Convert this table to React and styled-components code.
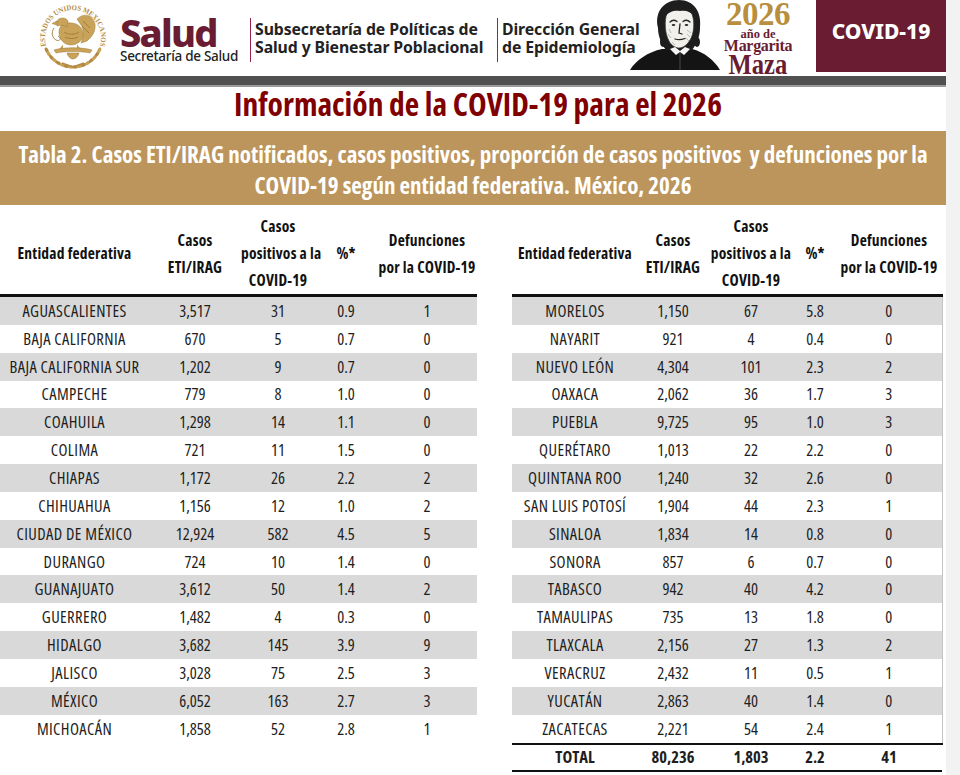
import React from "react";
import styled, { createGlobalStyle } from "styled-components";

const COND = `"Open Sans", "Liberation Sans Narrow", sans-serif`;
const MAROON = "#691c32";
const GOLD = "#bc955c";

const GlobalStyle = createGlobalStyle`
  html, body { margin: 0; padding: 0; background: #fff; }
  body { font-family: ${COND}; font-stretch: 75%; color: #1a1a1a; }
`;

const Page = styled.div`
  display: grid;
  grid-template-columns: 946px 14px;
  min-height: 775px;
`;
const Main = styled.main`
  display: flex;
  flex-direction: column;
`;
const Gutter = styled.aside`
  background: #f2f2f2;
`;

const Header = styled.header`
  height: 76px;
  display: flex;
  align-items: flex-start;
`;
const Seal = styled.div`
  margin: 2px 0 0 37px;
  width: 72px;
  height: 71px;
`;
const Brand = styled.div`
  margin: 15px 0 0 11px;
  display: flex;
  flex-direction: column;
  font-family: "Noto Sans", sans-serif;
  font-stretch: 100%;
`;
const BrandName = styled.span`
  font-size: 38px;
  font-weight: 800;
  line-height: 35px;
  letter-spacing: -1.8px;
  color: ${MAROON};
`;
const BrandSub = styled.span`
  font-size: 13.5px;
  font-weight: 500;
  line-height: 12px;
  color: #222;
  letter-spacing: -0.3px;
`;
const Divider = styled.div`
  width: 1px;
  height: 44px;
  margin: 18px 4px 0 ${(p) => p.$ml}px;
  background: #9b2247;
`;
const Unit = styled.div`
  margin-top: 20px;
  font-family: "Noto Sans", sans-serif;
  font-stretch: 100%;
  font-weight: 700;
  font-size: 15.8px;
  line-height: 18px;
  color: #222;
  width: ${(p) => p.$w}px;
  letter-spacing: -0.1px;
  white-space: nowrap;
`;
const Portrait = styled.div`
  width: 90px;
  height: 70px;
  margin-left: -10px;
`;
const YearMark = styled.div`
  margin: 0 0 0 5px;
  width: 66px;
  height: 72px;
  display: flex;
  flex-direction: column;
  align-items: center;
  font-family: "Liberation Serif", serif;
  font-stretch: 100%;
  font-weight: 700;
`;
const Year = styled.span`
  font-size: 33px;
  line-height: 29px;
  height: 29px;
  color: #b88f3e;
  letter-spacing: -0.5px;
`;
const YearSmall = styled.span`
  font-size: 12.5px;
  line-height: 10px;
  height: 10px;
  color: ${MAROON};
`;
const YearMid = styled.span`
  font-size: 16px;
  line-height: 13px;
  height: 13px;
  color: ${MAROON};
  letter-spacing: -0.3px;
`;
const YearBig = styled.span`
  font-size: 30px;
  line-height: 21px;
  height: 21px;
  margin-top: 1px;
  color: ${MAROON};
  transform: scaleX(0.82);
`;
const CovidBox = styled.div`
  margin-left: auto;
  width: 130px;
  height: 72px;
  background: ${MAROON};
  color: #fff;
  display: flex;
  align-items: center;
  justify-content: center;
  font-family: "Noto Sans", sans-serif;
  font-stretch: 100%;
  font-weight: 800;
  font-size: 21px;
  padding-bottom: 10px;
  box-sizing: border-box;
`;

const RuleBar = styled.div`
  height: 9px;
  background: #505050;
  border-bottom: 2px solid #9a9a9a;
`;

const Title = styled.h1`
  margin: 0;
  height: 44px;
  line-height: 34px;
  padding-left: 10px;
  text-align: center;
  font-size: 31.5px;
  font-weight: 700;
  color: #800000;
`;

const Caption = styled.div`
  background: ${GOLD};
  color: #fff;
  height: 74px;
  box-sizing: border-box;
  padding: 8px 0 0;
  text-align: center;
  font-size: 23px;
  font-weight: 700;
  line-height: 31px;
  white-space: pre-wrap;
`;

const Tables = styled.div`
  display: flex;
  gap: 35px;
  align-items: flex-start;
`;

const Table = styled.table`
  width: ${(p) => p.$w}px;
  table-layout: fixed;
  border-collapse: collapse;
  font-size: 16.5px;
`;
const Th = styled.th`
  height: 81px;
  padding: 8px 0 0;
  vertical-align: middle;
  font-size: 15.5px;
  font-weight: 700;
  line-height: 27px;
  letter-spacing: 0.2px;
  text-align: center;
  color: #111;
  border-bottom: 3px solid #111;
  white-space: nowrap;
`;
const Tr = styled.tr`
  background: ${(p) => (p.$shade ? "#d9d9d9" : "#fff")};
`;
const Td = styled.td`
  height: 27.85px;
  padding: 0;
  text-align: center;
  line-height: 20px;
  white-space: nowrap;
  color: #1e1e1e;
  font-weight: ${(p) => (p.$bold ? 700 : 400)};
  letter-spacing: ${(p) => (p.$name ? "0.4px" : "0")};
  ${(p) => (p.$edge ? "border-right: 1px solid #c4c4c4;" : "")}
`;
const TotalRow = styled.tr`
  border-top: 2px solid #111;
  border-bottom: 2px solid #111;
  td { height: 25px; }
`;

const left = [
  ["AGUASCALIENTES", "3,517", "31", "0.9", "1"],
  ["BAJA CALIFORNIA", "670", "5", "0.7", "0"],
  ["BAJA CALIFORNIA SUR", "1,202", "9", "0.7", "0"],
  ["CAMPECHE", "779", "8", "1.0", "0"],
  ["COAHUILA", "1,298", "14", "1.1", "0"],
  ["COLIMA", "721", "11", "1.5", "0"],
  ["CHIAPAS", "1,172", "26", "2.2", "2"],
  ["CHIHUAHUA", "1,156", "12", "1.0", "2"],
  ["CIUDAD DE MÉXICO", "12,924", "582", "4.5", "5"],
  ["DURANGO", "724", "10", "1.4", "0"],
  ["GUANAJUATO", "3,612", "50", "1.4", "2"],
  ["GUERRERO", "1,482", "4", "0.3", "0"],
  ["HIDALGO", "3,682", "145", "3.9", "9"],
  ["JALISCO", "3,028", "75", "2.5", "3"],
  ["MÉXICO", "6,052", "163", "2.7", "3"],
  ["MICHOACÁN", "1,858", "52", "2.8", "1"],
];
const right = [
  ["MORELOS", "1,150", "67", "5.8", "0"],
  ["NAYARIT", "921", "4", "0.4", "0"],
  ["NUEVO LEÓN", "4,304", "101", "2.3", "2"],
  ["OAXACA", "2,062", "36", "1.7", "3"],
  ["PUEBLA", "9,725", "95", "1.0", "3"],
  ["QUERÉTARO", "1,013", "22", "2.2", "0"],
  ["QUINTANA ROO", "1,240", "32", "2.6", "0"],
  ["SAN LUIS POTOSÍ", "1,904", "44", "2.3", "1"],
  ["SINALOA", "1,834", "14", "0.8", "0"],
  ["SONORA", "857", "6", "0.7", "0"],
  ["TABASCO", "942", "40", "4.2", "0"],
  ["TAMAULIPAS", "735", "13", "1.8", "0"],
  ["TLAXCALA", "2,156", "27", "1.3", "2"],
  ["VERACRUZ", "2,432", "11", "0.5", "1"],
  ["YUCATÁN", "2,863", "40", "1.4", "0"],
  ["ZACATECAS", "2,221", "54", "2.4", "1"],
];
const total = ["TOTAL", "80,236", "1,803", "2.2", "41"];

function SealIcon() {
  const leaves = [];
  const n = 16;
  for (let i = 0; i < n; i++) {
    const deg = 205 + (i * 130) / (n - 1);
    const a = (deg * Math.PI) / 180;
    const x = 36 + Math.cos(a) * 29;
    const y = 36 - Math.sin(a) * 29;
    leaves.push(
      <ellipse key={i} cx={x} cy={y} rx="3" ry="1.7" fill={i % 2 ? "#c9a257" : "#b38a44"}
        transform={`rotate(${90 - deg} ${x} ${y})`} />
    );
  }
  return (
    <svg viewBox="0 0 72 71" width="72" height="71">
      <defs>
        <path id="sealArc" d="M 10.6 47.8 A 28 28 0 1 1 61.4 47.8" />
      </defs>
      <text fontSize="7.4" fill="#b58d46" fontFamily="Liberation Serif, serif" fontWeight="700">
        <textPath href="#sealArc" startOffset="50%" textAnchor="middle" textLength="104" lengthAdjust="spacingAndGlyphs">ESTADOS UNIDOS MEXICANOS</textPath>
      </text>
      {leaves}
      <g fill="#c9a35a" stroke="#9c7a35" strokeWidth="0.5">
        <path d="M40 17 C47 10 56 13 58 22 C59 29 55 35 50 39 L44 41 C47 34 47 27 44 23 Z" />
        <path d="M22 30 C22 23 28 20 34 21 C41 21 46 26 46 32 C46 39 40 43 34 43 C27 43 22 37 22 30 Z" />
        <path d="M20 19 C22 15 29 15 31 19 L30 25 C27 23 24 23 20 24 Z" />
        <path d="M20 19 L15 21.5 L19.5 23 Z" />
        <path d="M26 43 L22 48 L26 47 M40 43 L44 48 L40 47" />
        <path d="M17 48 C26 45 46 45 55 48 L53 51 C44 49 28 49 19 51 Z" />
        <path d="M30 51 C31 55 34 57 36 57 C38 57 41 55 42 51 Z" />
      </g>
      <g fill="none" stroke="#9c7a35" strokeWidth="0.9">
        <path d="M27 30 C31 33 38 33 42 30" />
        <path d="M28 35 C31 37 38 37 41 35" />
        <path d="M17 26 C14 30 15 36 19 38 C23 40 25 36 21 34" />
        <path d="M46 19 L53 26 M45 24 L52 31" />
      </g>
      <path d="M25 61 L36 65 L47 61" fill="none" stroke="#b38a44" strokeWidth="1.4" />
    </svg>
  );
}

function PortraitIcon() {
  return (
    <svg viewBox="0 0 90 70" width="90" height="70">
      <path d="M0 70 C6 60 18 52 32 49 L62 49 C74 52 84 60 90 70 Z" fill="#141414" />
      <path d="M28 28 C24 12 34 0 49 0 C64 0 72 12 70 28 C70 37 66 45 62 50 L36 50 C32 45 28 37 28 28 Z" fill="#1e1e1e" />
      <path d="M37 13 C42 8 58 8 62 14 C65 22 64 34 60 40 C57 45 53 48 49 48 C45 48 41 45 39 41 C35 34 34 21 37 13 Z" fill="#f2f0eb" stroke="#333" strokeWidth="0.7" />
      <path d="M35 17 C37 6 45 3 50 6 C55 3 63 6 65 17 C61 11 55 10 50 11 C45 10 39 11 35 17 Z" fill="#1e1e1e" />
      <g fill="none" stroke="#262626" strokeWidth="1.3" strokeLinecap="round">
        <path d="M40 22 C42 20 45 20 47 21.5" />
        <path d="M53 21.5 C55 20 58 20 60 22" />
        <path d="M50 24 L49 33 L52 34" />
        <path d="M45 39 C48 40 51 40 55 38.5" />
      </g>
      <g fill="#262626">
        <ellipse cx="43.5" cy="25" rx="1.8" ry="1.1" />
        <ellipse cx="56.5" cy="25" rx="1.8" ry="1.1" />
      </g>
      <g stroke="#777" strokeWidth="0.45" fill="none">
        <path d="M57 30 L61 33 M57 34 L60 37 M56 38 L59 41 M39 29 L41 33 M38 34 L41 38 M42 42 L45 45" />
      </g>
      <path d="M40 49 L46 55 L50 52 L54 55 L60 49 L55 47 L50 51 L45 47 Z" fill="#f5f5f5" />
      <path d="M50 53 L50 70" stroke="#555" strokeWidth="0.8" />
      <ellipse cx="33" cy="42" rx="3" ry="5" fill="#1e1e1e" />
      <ellipse cx="67" cy="42" rx="3" ry="5" fill="#1e1e1e" />
    </svg>
  );
}

function DataTable({ width, cols, rows, edge, totalRow }) {
  return (
    <Table $w={width}>
      <colgroup>
        {cols.map((c, i) => <col key={i} style={{ width: c }} />)}
      </colgroup>
      <thead>
        <tr>
          <Th>Entidad federativa</Th>
          <Th>Casos<br />ETI/IRAG</Th>
          <Th>Casos<br />positivos a la<br />COVID-19</Th>
          <Th>%*</Th>
          <Th>Defunciones<br />por la COVID-19</Th>
        </tr>
      </thead>
      <tbody>
        {rows.map((r, i) => (
          <Tr key={r[0]} $shade={i % 2 === 0}>
            {r.map((v, j) => <Td key={j} $name={j === 0} $edge={edge && j === 4}>{v}</Td>)}
          </Tr>
        ))}
        {totalRow && (
          <TotalRow>
            {totalRow.map((v, j) => <Td key={j} $bold>{v}</Td>)}
          </TotalRow>
        )}
      </tbody>
    </Table>
  );
}

export default function App() {
  return (
    <>
      <GlobalStyle />
      <Page>
        <Main>
          <Header>
            <Seal><SealIcon /></Seal>
            <Brand>
              <BrandName>Salud</BrandName>
              <BrandSub>Secretaría de Salud</BrandSub>
            </Brand>
            <Divider $ml={12} />
            <Unit $w={238}>Subsecretaría de Políticas de<br />Salud y Bienestar Poblacional</Unit>
            <Divider $ml={4} />
            <Unit $w={138}>Dirección General<br />de Epidemiología</Unit>
            <Portrait><PortraitIcon /></Portrait>
            <YearMark>
              <Year>2026</Year>
              <YearSmall>año de</YearSmall>
              <YearMid>Margarita</YearMid>
              <YearBig>Maza</YearBig>
            </YearMark>
            <CovidBox>COVID-19</CovidBox>
          </Header>
          <RuleBar />
          <Title>Información de la COVID-19 para el 2026</Title>
          <Caption>{"Tabla 2. Casos ETI/IRAG notificados, casos positivos, proporción de casos positivos  y defunciones por la\nCOVID-19 según entidad federativa. México, 2026"}</Caption>
          <Tables>
            <DataTable width={477} cols={[149, 92, 74, 62, 100]} rows={left} />
            <DataTable width={430} cols={[126, 70, 86, 42, 106]} rows={right} edge totalRow={total} />
          </Tables>
        </Main>
        <Gutter />
      </Page>
    </>
  );
}
